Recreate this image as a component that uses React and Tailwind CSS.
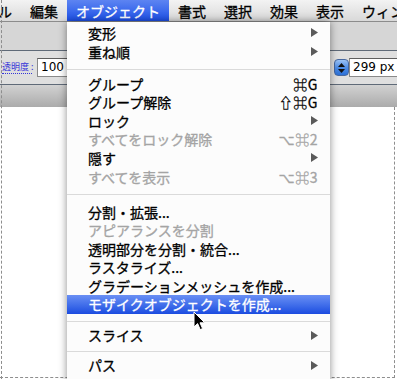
import React from 'react';

const FONT = { fontFamily: '"Noto Sans CJK JP", "DejaVu Sans", sans-serif' };

const BAR = ['ル', '編集', 'オブジェクト', '書式', '選択', '効果', '表示', 'ウィン'];

const SECTIONS = [
  [{ t: '変形', sub: true }, { t: '重ね順', sub: true }],
  [
    { t: 'グループ', k: '⌘G' },
    { t: 'グループ解除', k: '⇧⌘G' },
    { t: 'ロック', sub: true },
    { t: 'すべてをロック解除', k: '⌥⌘2', off: true },
    { t: '隠す', sub: true },
    { t: 'すべてを表示', k: '⌥⌘3', off: true },
  ],
  [
    { t: '分割・拡張...' },
    { t: 'アピアランスを分割', off: true },
    { t: '透明部分を分割・統合...' },
    { t: 'ラスタライズ...' },
    { t: 'グラデーションメッシュを作成...' },
    { t: 'モザイクオブジェクトを作成...', hi: true },
  ],
  [{ t: 'スライス', sub: true }],
  [{ t: 'パス', sub: true }],
];

// separator blocks between sections (heights differ slightly in the shot)
const SEPS = ['h-[13.4px] pt-[8px]', 'h-[16.4px] pt-[8px]', 'h-[12.4px] pt-[7px]', 'h-[11.4px] pt-[6px]'];

const Arrow = ({ white }) => (
  <svg width="7" height="9" viewBox="0 0 7 9">
    <path d="M0 0 L7 4.5 L0 9 Z" fill={white ? '#fff' : '#5a5a5a'} />
  </svg>
);

const Item = ({ t, k, sub, off, hi }) => (
  <div
    className={`flex items-center h-[18.6px] pl-[21px] pr-[12px] text-[14px] leading-none ${
      hi ? 'bg-gradient-to-b from-[#6a8ff4] to-[#1b4be0] text-white' : off ? 'text-[#a4a4a4]' : 'text-black'
    }`}
  >
    <span className="flex-1 whitespace-nowrap">{t}</span>
    {k && <span className="whitespace-nowrap tracking-[0.5px]">{k}</span>}
    {sub && <Arrow white={hi} />}
  </div>
);

export default function App() {
  return (
    <div className="relative w-[397px] h-[379px] overflow-hidden bg-white [-webkit-text-stroke:0.3px]" style={FONT}>
      {/* menu bar */}
      <div className="flex h-[22px] items-center bg-gradient-to-b from-[#f3f3f3] to-[#d9d9d9] border-b border-[#8c8c8c] text-[14px] leading-none text-black">
        {BAR.map((m, i) => (
          <div
            key={m}
            className={`h-full flex items-center px-[9px] whitespace-nowrap ${i === 0 ? 'ml-[-11px]' : ''} ${
              i === 2 ? 'bg-gradient-to-b from-[#5d84f2] to-[#1c4ee6] text-white' : ''
            }`}
          >
            {m}
          </div>
        ))}
      </div>

      {/* palette toolbar behind the menu */}
      <div className="h-[29px] bg-[#d6d6d6] border-b border-[#5f6a78]" />
      <div className="h-[34px] bg-[#dfdfdf] border-b border-[#5f6a78] flex items-center justify-between [-webkit-text-stroke:0px]" style={{ fontFamily: '"DejaVu Sans", sans-serif' }}>
        <div className="flex items-center h-full">
          <span
            className="ml-[2px] w-[30px] text-[#3535d8] border-b border-dotted border-[#3535d8] leading-[12px] text-[9px] whitespace-nowrap"
            style={FONT}
          >
            透明度 :
          </span>
          <div className="ml-[5px] w-[80px] h-[19px] bg-white border border-[#8a8a8a] border-t-[#5e5e5e] text-[12px] leading-[17px] pl-[3px] text-black">
            100
          </div>
        </div>
        <div className="flex items-center">
          <div className="w-[15px] h-[17px] rounded-[4px] bg-gradient-to-b from-[#9cc3f5] via-[#4f8ee6] to-[#2b6fd6] border border-[#4668a0] flex flex-col items-center justify-center gap-[2px]">
            <svg width="7" height="4" viewBox="0 0 7 4"><path d="M0 4 L3.5 0 L7 4 Z" fill="#111" /></svg>
            <svg width="7" height="4" viewBox="0 0 7 4"><path d="M0 0 L3.5 4 L7 0 Z" fill="#111" /></svg>
          </div>
          <div className="w-[48px] h-[19px] bg-white border border-[#8a8a8a] border-t-[#5e5e5e] border-r-0 text-[12px] leading-[17px] pl-[3px] text-black whitespace-nowrap">
            299 px
          </div>
        </div>
      </div>
      <div className="h-[22px] bg-gradient-to-b from-[#d2d2d2] to-[#ababab]" />

      {/* canvas */}
      <div className="h-[271px] mr-[2px] border-b border-r border-dashed border-[#8e8e8e]" />

      {/* left dashed frame edge */}
      <div className="absolute left-[1px] top-0 bottom-0 border-l border-dashed border-[#8e8e8e]" />

      {/* Object menu */}
      <div className="absolute left-[67px] top-[22px] w-[263px] h-[380px] bg-[#fcfcfc] pt-[1.7px] shadow-[0_0_8px_rgba(0,0,0,0.45)]">
        {SECTIONS.map((sec, si) => (
          <React.Fragment key={si}>
            {sec.map(it => <Item key={it.t} {...it} />)}
            {si < SEPS.length && (
              <div className={SEPS[si]}>
                <div className="h-px bg-[#dadada]" />
              </div>
            )}
          </React.Fragment>
        ))}
      </div>

      {/* mouse pointer */}
      <svg className="absolute left-[193px] top-[311px]" width="13" height="20" viewBox="0 0 13 20">
        <path d="M1 1 L1 16 L4.6 12.6 L7.2 18.6 L9.6 17.6 L7 11.8 L11.8 11.8 Z" fill="#000" stroke="#fff" strokeWidth="1" strokeLinejoin="round" />
      </svg>
    </div>
  );
}
